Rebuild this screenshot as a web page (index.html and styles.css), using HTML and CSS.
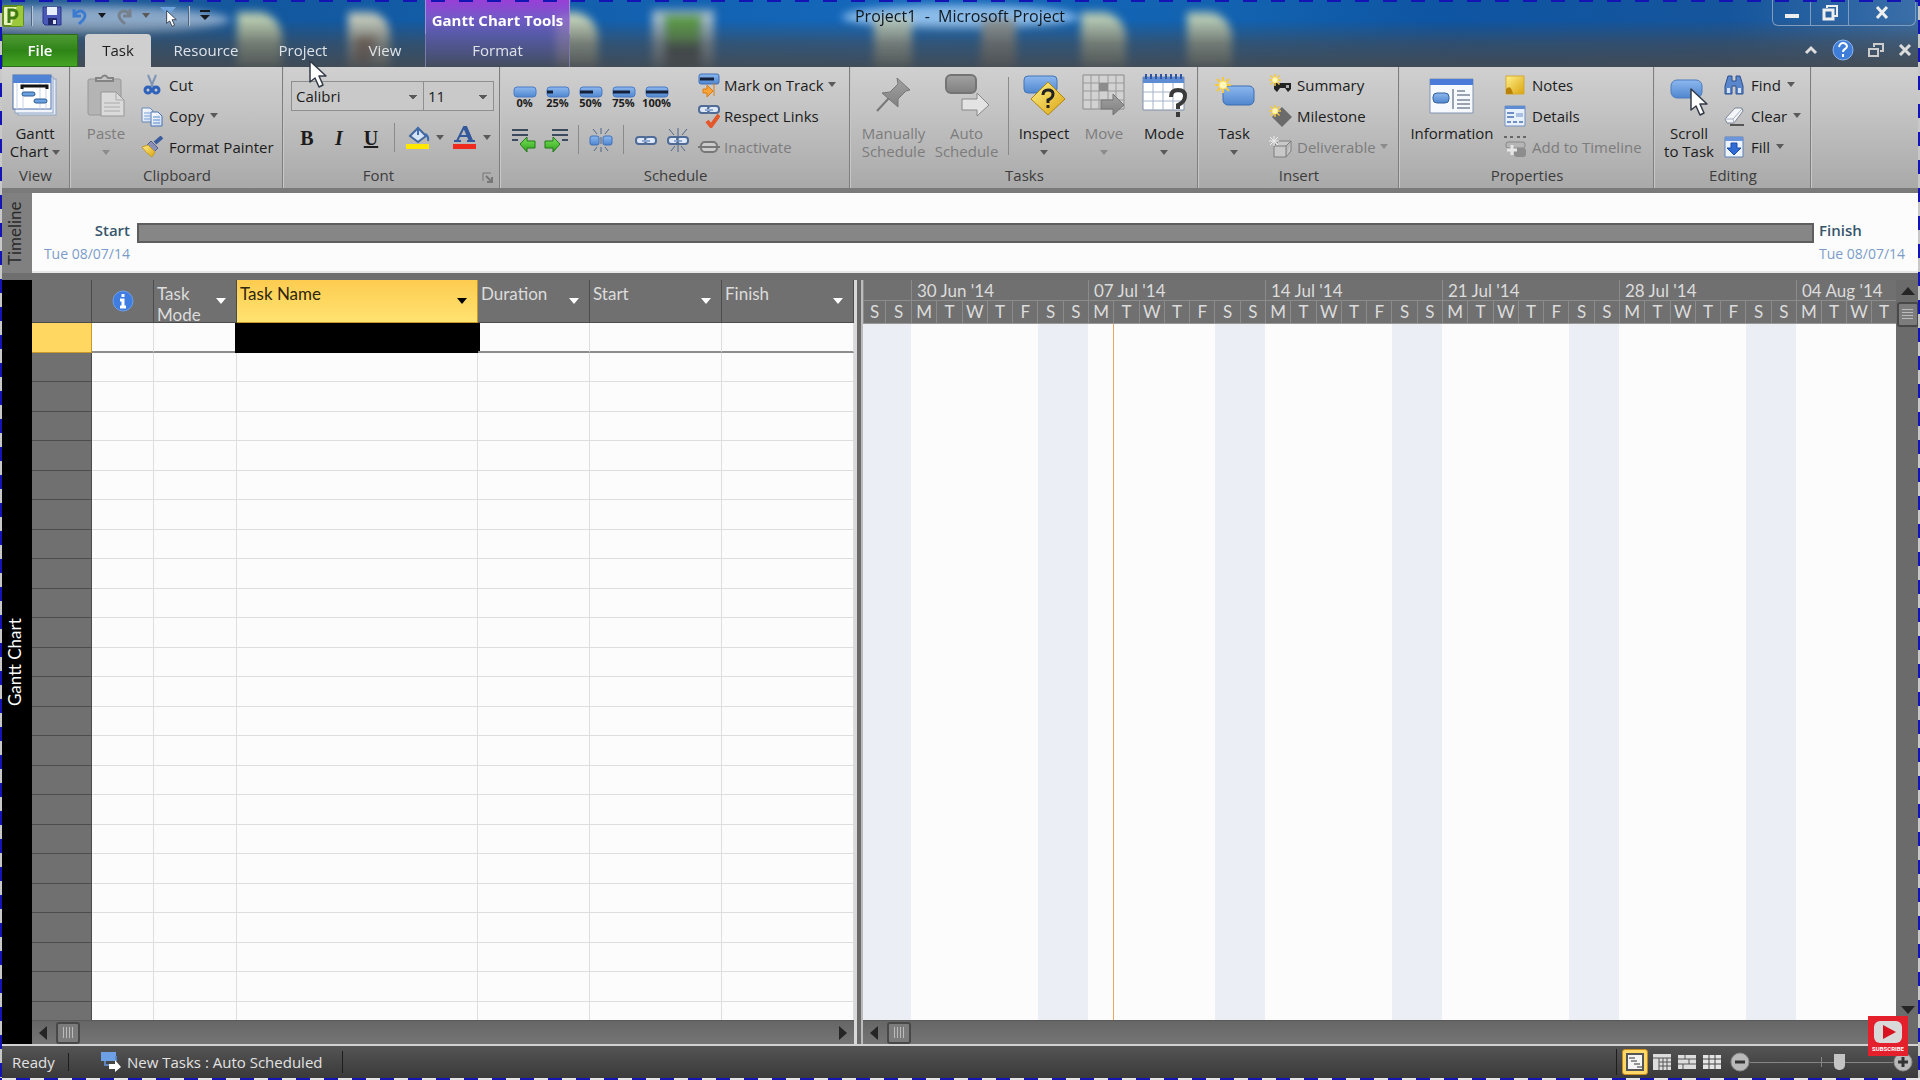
FILE: index.html
```html
<!DOCTYPE html>
<html lang="en">
  <head>
    <meta charset="utf-8">
    <title>Project1 - Microsoft Project</title>
    <link rel="stylesheet" href="styles.css">
  </head>
  <body>

    <!-- shared gradients and repeated symbols -->
    <svg class="defs" width="0" height="0">
      <defs>
        <linearGradient id="blue" x1="0" y1="0" x2="0" y2="1"><stop offset="0" stop-color="#8db8ee"/><stop offset="1" stop-color="#4f86cf"/></linearGradient>
        <linearGradient id="grey" x1="0" y1="0" x2="0" y2="1"><stop offset="0" stop-color="#a2a2a2"/><stop offset="1" stop-color="#808080"/></linearGradient>
        <linearGradient id="yellow" x1="0" y1="0" x2="1" y2="1"><stop offset="0" stop-color="#fff08a"/><stop offset="1" stop-color="#dba410"/></linearGradient>
        <linearGradient id="lime" x1="0" y1="0" x2="0" y2="1"><stop offset="0" stop-color="#7be05a"/><stop offset="1" stop-color="#2fa51c"/></linearGradient>
        <linearGradient id="paper" x1="0" y1="0" x2="1" y2="1"><stop offset="0" stop-color="#ffffff"/><stop offset="1" stop-color="#c9daf2"/></linearGradient>
        <symbol id="star" viewBox="0 0 16 16">
          <path d="M8 0v16M0 8h16M2 2l12 12M14 2L2 14" stroke="#f6c83a" stroke-width="2"/>
          <circle cx="8" cy="8" r="4" fill="#fff6b8" stroke="#f9dc6a"/>
        </symbol>
        <symbol id="chain" viewBox="0 0 22 12">
          <rect x="1" y="2" width="11" height="7" rx="3" fill="#dfe8f6" stroke="#4f6b96" stroke-width="2"/>
          <rect x="10" y="2" width="11" height="7" rx="3" fill="#dfe8f6" stroke="#4f6b96" stroke-width="2"/>
          <path d="M7 6h8" stroke="#8fa9d2" stroke-width="2"/>
        </symbol>
        <symbol id="pointer" viewBox="0 0 18 28">
          <path d="M1 1v21l5-4 4 9 4-2-4-9h7z" fill="#fff" stroke="#333a48" stroke-width="1.5" stroke-linejoin="round"/>
        </symbol>
      </defs>
    </svg>

    <header class="glass">
      <svg class="wallpaper" aria-hidden="true">
        <filter id="soft" x="-20%" y="-20%" width="140%" height="140%"><feGaussianBlur stdDeviation="4"/></filter>
        <g filter="url(#soft)">
          <ellipse cx="80" cy="20" rx="150" ry="14" fill="#b9c9dc" opacity=".7"/>
          <path d="M237 12h24q18 4 21 24v34h-45z" fill="#b4c6ac"/>
          <path d="M348 12h24q17 4 18 24v34h-42z" fill="#bcc2b6"/>
          <path d="M355 36h22l-6 30h-18z" fill="#9a7a66"/>
          <path d="M556 12h20q19 4 22 24v34h-42z" fill="#bccab4"/>
          <path d="M652 10h62v60h-62z" fill="#9db6c4"/>
          <path d="M664 14h38v30h-38z" fill="#5d9a48"/>
          <path d="M664 44h38v30h-38z" fill="#3c4742"/>
          <ellipse cx="960" cy="17" rx="118" ry="12" fill="#8abbe8"/>
          <path d="M874 16h38v54h-38z" fill="#b1c4b8"/>
          <path d="M982 18h34v52h-36z" fill="#8b9495"/>
          <path d="M1081 12h24q18 4 21 24v34h-45z" fill="#b1c4b0"/>
          <path d="M1187 12h24q18 4 21 24v34h-45z" fill="#b1c4b0"/>
        </g>
      </svg>
      <div class="shade"></div>

      <div class="title-row">
        <div class="title-left">
          <div class="quick-access">
            <svg class="app-icon" width="22" height="22"><rect x="1" y="1" width="20" height="20" rx="2" fill="#e8f3bd" stroke="#5d8c1c" stroke-width="2"/><path d="M15 1h6v20H9z" fill="#9cc83c"/><path d="M7 18V5h4a4 4 0 0 1 0 8H7" fill="none" stroke="#3f7a12" stroke-width="3"/></svg>
            <span class="bar"></span>
            <button title="Save"><svg width="20" height="20"><path d="M1 1h18v18H3l-2-2z" fill="#4a58b8" stroke="#2c3787"/><path d="M5 1h10v8H5z" fill="#e9eefc"/><path d="M6 12h9v7H6z" fill="#1f2766"/><path d="M11 14h3v4h-3z" fill="#dfe4f7"/></svg></button>
            <button title="Undo"><svg width="18" height="20"><path d="M3 3v7h7M3 9q5-6 9-3t0 8l-4 4" fill="none" stroke="#3d7bd0" stroke-width="3"/></svg><i class="caret dark"></i></button>
            <button title="Redo"><svg width="18" height="20"><path d="M15 3v7H8M15 9Q10 3 6 6t0 8l4 4" fill="none" stroke="#77818d" stroke-width="3"/></svg><i class="caret"></i></button>
            <button title="Select"><svg width="22" height="22"><path d="M1 2h16l-6 7v8l-4-3V9z" fill="#6fa3dc"/><use href="#pointer" x="7" y="5" width="11" height="17"/></svg></button>
            <span class="bar"></span>
            <button title="Customize Quick Access Toolbar"><svg width="12" height="12"><path d="M1 1h10" stroke="#15181c" stroke-width="2"/><path d="M1 5h10l-5 5z" fill="#15181c"/></svg></button>
          </div>
          <div class="context-title">Gantt Chart Tools</div>
        </div>
        <div class="window-title">Project1&nbsp; -&nbsp; Microsoft Project</div>
        <div class="window-buttons">
          <button title="Minimize"><svg width="16" height="16"><path d="M1 9h14v4H1z" fill="#eee"/></svg></button>
          <button title="Restore"><svg width="16" height="16"><path d="M5 3V1h10v10h-3" fill="none" stroke="#eee" stroke-width="2"/><rect x="2" y="5" width="9" height="9" fill="none" stroke="#eee" stroke-width="3"/></svg></button>
          <button class="wide" title="Close"><svg width="16" height="16"><path d="M3 2l10 11M13 2L3 13" stroke="#eee" stroke-width="3"/></svg></button>
        </div>
      </div>

      <nav class="tabs">
        <button class="tab file">File</button>
        <button class="tab active">Task</button>
        <button class="tab resource">Resource</button>
        <button class="tab project">Project</button>
        <button class="tab view">View</button>
        <button class="tab format">Format</button>
        <div class="tab-tools">
          <button title="Minimize the Ribbon"><svg width="14" height="12"><path d="M2 9l5-5 5 5" fill="none" stroke="#ddd" stroke-width="3"/></svg></button>
          <button title="Help"><svg width="22" height="22"><circle cx="11" cy="11" r="10" fill="#3f7ed8" stroke="#8db4ec"/><path d="M7 8q1-4 4-4t4 3q0 2-2 3t-2 3M11 15v3" fill="none" stroke="#fff" stroke-width="2"/></svg></button>
          <button title="Restore Window"><svg width="16" height="14"><path d="M6 4V1h9v7h-3" fill="none" stroke="#ccc" stroke-width="2"/><path d="M1 6h9v7H1z" fill="none" stroke="#ccc" stroke-width="2"/></svg></button>
          <button title="Close Window"><svg width="14" height="12"><path d="M2 1l10 10M12 1L2 11" stroke="#ddd" stroke-width="3"/></svg></button>
        </div>
      </nav>
    </header>

    <div class="ribbon">

      <section class="group g-view">
        <div class="group-body">
          <button class="big">
            <svg width="46" height="42"><rect x="6" y="5" width="38" height="36" fill="#e7edf6" stroke="#8fa3c2"/><rect x="3" y="3" width="38" height="36" fill="#f1f5fb" stroke="#8fa3c2"/><rect x="1" y="1" width="38" height="34" fill="#fff" stroke="#4c6ea8"/><path d="M1 1h38v8H1z" fill="#4f83d6"/><path d="M5 9v26M11 9v26M28 9v26M34 9v26" stroke="#c9d5e8"/><path d="M10 15v-3h25v3" fill="none" stroke="#111" stroke-width="3"/><rect x="10" y="18" width="13" height="4" rx="2" fill="#6aa2df" stroke="#2e5a95"/><rect x="22" y="25" width="13" height="4" rx="2" fill="#6aa2df" stroke="#2e5a95"/></svg>
            <span>Gantt<br>Chart <i class="caret"></i></span>
          </button>
        </div>
        <h2>View</h2>
      </section>

      <section class="group g-clipboard">
        <div class="group-body">
          <button class="big off">
            <svg width="40" height="42"><rect x="2" y="5" width="33" height="36" rx="2" fill="#b4b4b4" stroke="#989898"/><path d="M10 7h17V4h-5q-3-5-7 0h-5z" fill="#c6c6c6" stroke="#848484" stroke-width="2"/><path d="M15 18h15l8 8v16H15z" fill="#dadada" stroke="#979797"/><path d="M30 18v8h8M18 29h16M18 33h16M18 37h16" fill="none" stroke="#aaa"/></svg>
            <span>Paste<br><i class="caret"></i></span>
          </button>
          <div class="stack">
            <button class="small"><svg width="22" height="22"><path d="M7 1l5 12M15 1l-5 12" stroke="#7f93b4" stroke-width="2"/><circle cx="7" cy="16" r="3" fill="none" stroke="#2e62bb" stroke-width="3"/><circle cx="15" cy="16" r="3" fill="none" stroke="#2e62bb" stroke-width="3"/></svg>Cut</button>
            <button class="small"><svg width="22" height="22"><path d="M1 3h8l3 3v11H1z" fill="url(#paper)" stroke="#6687b8"/><path d="M3 8h6M3 11h6M3 14h6" stroke="#7fa1d4"/><path d="M10 7h7l4 4v10H10z" fill="url(#paper)" stroke="#4a73b3"/><path d="M12 12h7M12 15h7M12 18h7" stroke="#5f8bcb"/></svg>Copy <i class="caret"></i></button>
            <button class="small"><svg width="22" height="22"><path d="M21 1l-7 6" stroke="#3b5c9c" stroke-width="4"/><path d="M10 5l7 7-4 4-7-7z" fill="#8a90b5" stroke="#555c85"/><path d="M1 11l6-2 7 7-3 5q-6-4-10-10z" fill="url(#yellow)" stroke="#c49b25"/></svg>Format Painter</button>
          </div>
        </div>
        <h2>Clipboard</h2>
      </section>

      <section class="group g-font">
        <div class="group-body column">
          <div class="combos">
            <select class="font-name" aria-label="Font"><option>Calibri</option></select>
            <select class="font-size" aria-label="Font Size"><option>11</option></select>
          </div>
          <div class="font-tools">
            <button class="letter" title="Bold"><b>B</b></button>
            <button class="letter" title="Italic"><em>I</em></button>
            <button class="letter" title="Underline"><u>U</u></button>
            <span class="sep"></span>
            <button class="colour" title="Background Color"><svg width="24" height="24"><path d="M4 10l8-8 8 8-8 6z" fill="#d6e4f5" stroke="#43679c" stroke-width="2"/><path d="M12 9V1M19 8q4 2 3 7" fill="none" stroke="#3d6db4" stroke-width="2"/><path d="M0 18h23v5H0z" fill="#ffe800"/></svg><i class="caret"></i></button>
            <button class="colour" title="Font Color"><svg width="24" height="24"><path d="M4 15L11 1h2l6 14M7 10h9M1 15h7M14 15h8" fill="none" stroke="#33589b" stroke-width="2"/><path d="M12 1l6 14" stroke="#33589b" stroke-width="4"/><path d="M0 18h23v5H0z" fill="#f02a1c"/></svg><i class="caret"></i></button>
          </div>
        </div>
        <h2>Font</h2>
        <button class="launcher" title="Font"><svg width="11" height="11"><path d="M1 9V1h8" fill="none" stroke="#777"/><path d="M4 4l5 5M10 5v5H5" fill="none" stroke="#777" stroke-width="2"/></svg></button>
      </section>

      <section class="group g-schedule">
        <div class="group-body">
          <div class="schedule-tools">
            <div class="percents">
              <button><svg width="24" height="12"><rect x="1" y="1" width="22" height="10" rx="3" fill="url(#blue)" stroke="#4a7bc4"/></svg>0%</button>
              <button><svg width="24" height="12"><rect x="1" y="1" width="22" height="10" rx="3" fill="url(#blue)" stroke="#4a7bc4"/><path d="M1 6h6" stroke="#15203a" stroke-width="3"/></svg>25%</button>
              <button><svg width="24" height="12"><rect x="1" y="1" width="22" height="10" rx="3" fill="url(#blue)" stroke="#4a7bc4"/><path d="M1 6h13" stroke="#15203a" stroke-width="3"/></svg>50%</button>
              <button><svg width="24" height="12"><rect x="1" y="1" width="22" height="10" rx="3" fill="url(#blue)" stroke="#4a7bc4"/><path d="M1 6h17" stroke="#15203a" stroke-width="3"/></svg>75%</button>
              <button><svg width="24" height="12"><rect x="1" y="1" width="22" height="10" rx="3" fill="url(#blue)" stroke="#4a7bc4"/><path d="M1 6h22" stroke="#15203a" stroke-width="3"/></svg>100%</button>
            </div>
            <div class="links">
              <button title="Outdent Task"><svg width="24" height="24"><path d="M0 2h16M0 7h16M0 12h6" stroke="#3c4a60" stroke-width="2"/><path d="M8 16l7-7v4h8v7h-8v4z" fill="url(#lime)" stroke="#1f7a14"/></svg></button>
              <button title="Indent Task"><svg width="24" height="24"><path d="M8 2h16M8 7h16M18 12h6" stroke="#3c4a60" stroke-width="2"/><path d="M16 16L9 9v4H1v7h8v4z" fill="url(#lime)" stroke="#1f7a14"/></svg></button>
              <span class="sep"></span>
              <button title="Split Task"><svg width="24" height="24"><rect x="1" y="8" width="9" height="9" rx="2" fill="url(#blue)" stroke="#3f70b8"/><rect x="14" y="8" width="9" height="9" rx="2" fill="url(#blue)" stroke="#3f70b8"/><path d="M12 0v6M12 19v5M4 1l4 5M20 1l-4 5M5 23l3-4M19 23l-3-4M12 9v7" stroke="#4f6788" stroke-width="1"/></svg></button>
              <span class="sep"></span>
              <button title="Link Tasks"><svg width="24" height="24"><use href="#chain" x="1" y="7" width="22" height="12"/></svg></button>
              <button title="Unlink Tasks"><svg width="24" height="24"><use href="#chain" x="1" y="7" width="22" height="12"/><path d="M12 0v24M3 1l5 6M21 1l-5 6M5 23l4-5M19 23l-4-5" stroke="#4f6788"/></svg></button>
            </div>
          </div>
          <div class="stack">
            <button class="small"><svg width="22" height="24"><rect x="1" y="1" width="20" height="10" rx="2" fill="url(#blue)" stroke="#3f70b8"/><path d="M2 6h14" stroke="#15203a" stroke-width="3"/><path d="M5 16h4v-4l6 6-6 6v-4H5zM16 10v13" fill="#f9a436" stroke="#dc7a14"/></svg>Mark on Track <i class="caret"></i></button>
            <button class="small"><svg width="22" height="24"><use href="#chain" x="0" y="0" width="22" height="12"/><path d="M9 17l4 5L21 11" fill="none" stroke="#e4572a" stroke-width="4"/></svg>Respect Links</button>
            <button class="small off"><svg width="22" height="22"><rect x="3" y="6" width="16" height="10" rx="4" fill="#ccc" stroke="#777" stroke-width="2"/><path d="M0 11h22" stroke="#777" stroke-width="2"/></svg>Inactivate</button>
          </div>
        </div>
        <h2>Schedule</h2>
      </section>

      <section class="group g-tasks">
        <div class="group-body">
          <button class="big off">
            <svg width="42" height="42"><path d="M16 24L4 37" stroke="#777" stroke-width="2"/><path d="M24 4l13 12-4 1-8 8v8L9 19l8-1 8-8z" fill="url(#grey)" stroke="#777"/></svg>
            <span>Manually<br>Schedule</span>
          </button>
          <button class="big off">
            <svg width="46" height="42"><rect x="2" y="1" width="30" height="18" rx="5" fill="url(#grey)" stroke="#747474" stroke-width="2"/><path d="M18 25h15v-6l12 12-12 11v-6H18z" fill="#e3e3e3" stroke="#888"/></svg>
            <span>Auto<br>Schedule</span>
          </button>
          <span class="tall-sep"></span>
          <button class="big">
            <svg width="42" height="42"><rect x="1" y="2" width="33" height="17" rx="4" fill="url(#blue)" stroke="#4374b8"/><path d="M25 8l17 17-17 16L8 25z" fill="url(#yellow)" stroke="#b1860c"/><path d="M20 21q0-5 5-5t5 4-5 6v3M25 31v3" fill="none" stroke="#222" stroke-width="3"/></svg>
            <span>Inspect<br><i class="caret"></i></span>
          </button>
          <button class="big off">
            <svg width="44" height="42"><path d="M1 1h41v34H1z" fill="#d2d2d2" stroke="#8b8b8b"/><path d="M1 9h41M1 17h41M1 26h41M9 1v34M17 1v34M26 1v34M34 1v34" stroke="#999"/><path d="M17 9h9v8h-9z" fill="#8c8c8c"/><path d="M19 26h12v-6l11 11-11 10v-6H19z" fill="url(#grey)" stroke="#777"/></svg>
            <span>Move<br><i class="caret"></i></span>
          </button>
          <button class="big">
            <svg width="44" height="42"><path d="M1 3h41v33H1z" fill="#fff" stroke="#7f8fa8"/><path d="M1 3h41v6H1z" fill="#5d8bd4"/><path d="M4 0v5M9 0v5M14 0v5M19 0v5M24 0v5M29 0v5M34 0v5M39 0v5" stroke="#2f56a4" stroke-width="2"/><path d="M1 18h41M1 27h41M11 9v27M21 9v27M31 9v27" stroke="#a6b4ca"/><path d="M29 23q0-7 7-7t7 6-7 9v4M36 38v5" fill="none" stroke="#3a3a3a" stroke-width="4"/></svg>
            <span>Mode<br><i class="caret"></i></span>
          </button>
        </div>
        <h2>Tasks</h2>
      </section>

      <section class="group g-insert">
        <div class="group-body">
          <button class="big">
            <svg width="42" height="42"><rect x="10" y="12" width="31" height="19" rx="5" fill="url(#blue)" stroke="#3c6cb0"/><use href="#star" x="2" y="3" width="16" height="16"/></svg>
            <span>Task<br><i class="caret"></i></span>
          </button>
          <div class="stack">
            <button class="small"><svg width="24" height="22"><path d="M5 9h17v6l-3 3-3-4h-5l-3 4-3-3z" fill="#222"/><path d="M17 11h3v3h-3z" fill="#aaa"/><use href="#star" x="0" y="0" width="12" height="12"/></svg>Summary</button>
            <button class="small"><svg width="24" height="22"><path d="M13 2l10 10-10 10L3 12z" fill="#6b6b6b"/><use href="#star" x="0" y="0" width="12" height="12"/></svg>Milestone</button>
            <button class="small off"><svg width="24" height="22"><path d="M5 10h12v11H5zM5 10l5-5h12l-5 5M22 5v10l-5 6" fill="#c8c8c8" stroke="#7d7d7d"/><path d="M5 0v10M0 5h10M1 1l8 8M9 1L1 9" stroke="#eee"/></svg>Deliverable <i class="caret"></i></button>
          </div>
        </div>
        <h2>Insert</h2>
      </section>

      <section class="group g-properties">
        <div class="group-body">
          <button class="big">
            <svg width="46" height="42"><path d="M1 5h43v34H1z" fill="#f6f9fe" stroke="#8294b2"/><path d="M1 5h43v6H1z" fill="#4a7bd8"/><rect x="4" y="19" width="16" height="10" rx="4" fill="url(#blue)" stroke="#35609e"/><path d="M24 15v20M28 17h8M28 21h13M28 26h13M28 30h13M28 34h13" stroke="#9aa3b1" stroke-width="2"/></svg>
            <span>Information</span>
          </button>
          <div class="stack">
            <button class="small"><svg width="22" height="22"><path d="M2 2h18v18H2z" fill="url(#yellow)" stroke="#d5a930"/><path d="M2 15q5-5 7 5H2z" fill="#b9830a"/></svg>Notes</button>
            <button class="small"><svg width="22" height="22"><path d="M1 1h20v20H1z" fill="#e8f0fb" stroke="#7490bd"/><path d="M1 1h20v3H1z" fill="#5f8cd0"/><path d="M3 8h7M3 12h7M3 17h4M9 17h4M15 17h4" stroke="#6e90c4" stroke-width="2"/><path d="M12 8h7v4h-7z" fill="#a9c0e2"/></svg>Details</button>
            <button class="small off"><svg width="22" height="22"><path d="M0 1h3M6 1h3M13 1h3M19 1h3" stroke="#666" stroke-width="2"/><rect x="2" y="6" width="19" height="6" rx="2" fill="#b5b5b5" stroke="#888"/><rect x="10" y="12" width="12" height="9" rx="3" fill="#8d8d8d"/><path d="M8 9v10M3 14h10" stroke="#e6e6e6" stroke-width="3"/></svg>Add to Timeline</button>
          </div>
        </div>
        <h2>Properties</h2>
      </section>

      <section class="group g-editing">
        <div class="group-body">
          <button class="big">
            <svg width="42" height="42"><rect x="3" y="6" width="31" height="18" rx="6" fill="url(#blue)" stroke="#4b7cc0"/><use href="#pointer" x="22" y="14" width="18" height="28"/></svg>
            <span>Scroll<br>to Task</span>
          </button>
          <div class="stack">
            <button class="small"><svg width="22" height="22"><path d="M5 2h4v5h4V2h4l3 10v8h-7v-8H9v8H2v-8z" fill="#5a86cc" stroke="#2b4e8d"/><path d="M4 14h3v5H4zM15 14h3v5h-3z" fill="#d5e2f6"/></svg>Find <i class="caret"></i></button>
            <button class="small"><svg width="22" height="22"><path d="M2 14L12 3h7l1 3-9 12H4z" fill="#f4f6fa" stroke="#7c8797"/><path d="M2 14h8l1 4M10 14l9-10" fill="none" stroke="#a6b0bf"/><path d="M7 20h14" stroke="#555" stroke-width="2"/></svg>Clear <i class="caret"></i></button>
            <button class="small"><svg width="22" height="22"><path d="M2 1h18v20H2z" fill="#eef4fd" stroke="#5d7eb4"/><path d="M2 1h18v4H2z" fill="#6d96da"/><path d="M8 7h6v5h4l-7 7-7-7h4z" fill="#2e6bd4" stroke="#1d4da6"/></svg>Fill <i class="caret"></i></button>
          </div>
        </div>
        <h2>Editing</h2>
      </section>
    </div>

    <section class="timeline">
      <div class="side-label">Timeline</div>
      <div class="timeline-body">
        <div class="timeline-end start"><strong>Start</strong><span>Tue 08/07/14</span></div>
        <div class="timeline-bar"></div>
        <div class="timeline-end"><strong>Finish</strong><span>Tue 08/07/14</span></div>
      </div>
    </section>

    <main class="gantt">
      <div class="side-label black">Gantt Chart</div>

      <div class="sheet">
        <div class="sheet-view">
          <table>
            <colgroup><col class="c-row"><col class="c-info"><col class="c-mode"><col class="c-name"><col class="c-duration"><col class="c-start"><col class="c-finish"></colgroup>
            <thead>
              <tr>
                <th></th>
                <th class="info"><svg width="22" height="22"><circle cx="11" cy="11" r="10" fill="#3f7de0" stroke="#6c9eea"/><path d="M11 4v3M8 10h3v7M8 17h6" fill="none" stroke="#fff" stroke-width="3"/></svg></th>
                <th><div class="head">Task<br>Mode<i class="caret"></i></div></th>
                <th class="selected"><div class="head">Task Name<i class="caret"></i></div></th>
                <th><div class="head">Duration<i class="caret"></i></div></th>
                <th><div class="head">Start<i class="caret"></i></div></th>
                <th><div class="head">Finish<i class="caret"></i></div></th>
              </tr>
            </thead>
            <tbody id="rows"></tbody>
          </table>
        </div>
        <div class="hscroll">
          <button class="arrow left" title="Scroll left"></button>
          <span class="thumb"></span>
          <button class="arrow right" title="Scroll right"></button>
        </div>
      </div>

      <div class="splitter"></div>

      <div class="chart">
        <div class="timescale" id="timescale"></div>
        <div class="bars"><div class="today"></div></div>
        <div class="hscroll">
          <button class="arrow left" title="Scroll left"></button>
          <span class="thumb"></span>
        </div>
      </div>

      <div class="vscroll">
        <button class="arrow up" title="Scroll up"></button>
        <span class="thumb"></span>
        <button class="arrow down" title="Scroll down"></button>
      </div>
    </main>

    <footer class="status">
      <span class="ready">Ready</span>
      <span class="new-tasks"><svg width="22" height="22"><path d="M1 1h15v9H1z" fill="#6da0e4"/><path d="M5 10v4h5M16 5v5" fill="none" stroke="#5c86bd" stroke-width="2"/><path d="M9 13h6V9l6 7-6 5v-3H9z" fill="#fff"/></svg>New Tasks : Auto Scheduled</span>
      <div class="view-buttons">
        <button class="on" title="Gantt Chart"><svg width="18" height="18"><path d="M1 1h16v16H1z" fill="#f4f4f4" stroke="#555" stroke-width="2"/><path d="M3 5h6M5 8h6M8 11h6M11 14h5" stroke="#333" stroke-width="1"/></svg></button>
        <button title="Task Usage"><svg width="18" height="16"><path d="M0 0h18v16H0z" fill="#ddd"/><path d="M0 4h18M6 4v12M6 8h12M6 12h12M10 4v12M14 4v12" stroke="#555"/></svg></button>
        <button title="Team Planner"><svg width="18" height="14"><path d="M0 0h18v14H0z" fill="#ddd"/><path d="M0 4h18M0 9h18M7 0v4M5 9v5M11 4v5" stroke="#555" stroke-width="1"/></svg></button>
        <button title="Resource Sheet"><svg width="18" height="14"><path d="M0 0h18v14H0z" fill="#e4e4e4"/><path d="M0 4h18M0 9h18M6 0v14M12 0v14" stroke="#444" stroke-width="1"/></svg></button>
      </div>
      <div class="zoom">
        <button title="Zoom Out"><svg width="20" height="20"><circle cx="10" cy="10" r="9" fill="#b9b9b9" stroke="#8a8a8a"/><path d="M5 10h10" stroke="#333" stroke-width="3"/></svg></button>
        <input type="range" min="0" max="100" value="64" aria-label="Zoom">
        <button title="Zoom In"><svg width="20" height="20"><circle cx="10" cy="10" r="9" fill="#b9b9b9" stroke="#8a8a8a"/><path d="M5 10h10M10 5v10" stroke="#333" stroke-width="3"/></svg></button>
      </div>
    </footer>

    <svg class="mouse" width="18" height="28"><use href="#pointer" width="18" height="28"/></svg>

    <div class="subscribe">
      <svg width="30" height="24"><rect x="1" y="1" width="28" height="22" rx="6" fill="#d9d9d9"/><path d="M10 5l13 7-13 7z" fill="#d8121f"/></svg>
      SUBSCRIBE
    </div>
    <div class="ants"></div>

    <script src="script.js"></script>
  </body>
</html>
```
FILE: styles.css
```css
* {
  box-sizing: border-box;
}

body {
  margin: 0;
  height: 100vh;
  display: flex;
  flex-direction: column;
  overflow: hidden;
  background: #6f6f6f;
  color: #1c1c1c;
  font-family: "Open Sans", "Noto Sans", sans-serif;
  font-size: 15px;
  line-height: 18px;
}

button {
  display: flex;
  align-items: center;
  padding: 0;
  border: 0;
  background: none;
  color: inherit;
  font: inherit;
}

svg {
  display: block;
  flex: none;
}

.defs {
  position: absolute;
}

.caret {
  display: inline-block;
  flex: none;
  border: 4px solid transparent;
  border-top: 5px solid #5a5a5a;
  border-bottom: 0;
}

.caret.dark {
  border-top-color: #15181c;
}

/* title bar and tabs */

.glass {
  position: relative;
  flex: none;
  background: linear-gradient(90deg, #23598f, #12589f 14%, #1467ba 45%, #1262b0 65%, #0e55a3 75%, #15559c 90%, #3b6fa8);
}

.wallpaper,
.shade {
  position: absolute;
  top: 0;
  left: 0;
  width: 100%;
  height: 100%;
}

.shade {
  background: linear-gradient(rgba(70, 74, 78, 0) 30%, rgba(70, 74, 78, .6) 65%, rgba(70, 74, 78, .9));
}

.title-row {
  position: relative;
  display: grid;
  grid-template-columns: 1fr auto 1fr;
  height: 34px;
}

.title-left {
  display: flex;
}

.quick-access {
  flex: 0 0 425px;
  display: flex;
  align-items: center;
  gap: 9px;
  padding: 0 0 3px 2px;
}

.quick-access button {
  gap: 9px;
}

.bar {
  width: 2px;
  height: 20px;
  border-left: 1px solid #51657c;
  border-right: 1px solid #b5c6da;
}

.quick-access .bar {
  margin-left: -2px;
}

.context-title {
  flex: 0 0 145px;
  padding-top: 11px;
  border-left: 1px solid #a58fd4;
  border-right: 1px solid #a58fd4;
  background: linear-gradient(#9a3fd8, rgba(134, 88, 205, .85) 50%, rgba(110, 92, 180, .7));
  color: #fff;
  font-size: 15px;
  font-weight: 700;
  text-align: center;
  white-space: nowrap;
}

.window-title {
  padding-top: 7px;
  color: #101820;
  font-size: 16px;
}

.window-buttons {
  justify-self: end;
  display: flex;
  height: 26px;
  margin-right: 4px;
  border: 1px solid #7d9cc0;
  border-top: 0;
  border-radius: 0 0 6px 6px;
}

.window-buttons button {
  width: 38px;
  justify-content: center;
  border-right: 1px solid #7d9cc0;
}

.window-buttons .wide {
  width: 66px;
  border: 0;
}

.tabs {
  position: relative;
  display: flex;
  height: 33px;
  padding-left: 2px;
  color: #dfe3e8;
}

.tab {
  justify-content: center;
  padding-bottom: 2px;
}

.tab.file {
  width: 76px;
  margin-right: 7px;
  border: 1px solid #2e6b1a;
  background: linear-gradient(#4d9a33, #2f8417 50%, #45a524);
  color: #fff;
  font-weight: 600;
}

.tab.active {
  width: 66px;
  border-radius: 4px 4px 0 0;
  background: #cfcfcf;
  color: #1c1c1c;
}

.tab.resource {
  width: 110px;
}

.tab.project {
  width: 84px;
}

.tab.view {
  width: 80px;
}

.tab.format {
  width: 145px;
  border-left: 1px solid #7d79a8;
  border-right: 1px solid #7d79a8;
  background: linear-gradient(rgba(110, 92, 180, .7), rgba(80, 80, 110, .2));
}

.tab-tools {
  display: flex;
  gap: 14px;
  margin: 0 8px 0 auto;
  padding-bottom: 2px;
}

/* ribbon */

.ribbon {
  flex: none;
  display: flex;
  height: 126px;
  border-bottom: 5px solid #7a7a7a;
  background: linear-gradient(#d0d0d0, #c2c2c2 40%, #a9a9a9);
}

.group {
  position: relative;
  display: flex;
  flex-direction: column;
  border-right: 1px solid #7e7e7e;
  box-shadow: 1px 0 #c8c8c8;
}

.group h2 {
  margin: 0;
  height: 25px;
  padding-left: 2px;
  color: #3c3c3c;
  font-size: 15px;
  font-weight: 400;
  line-height: 24px;
  text-align: center;
}

.group-body {
  flex: 1;
  display: flex;
  padding: 2px 0 0 1px;
}

.group-body.column {
  flex-direction: column;
}

.g-view { width: 70px; }
.g-clipboard { width: 213px; }
.g-font { width: 217px; }
.g-schedule { width: 350px; }
.g-tasks { width: 348px; }
.g-insert { width: 201px; }
.g-properties { width: 255px; }
.g-editing { width: 157px; }

.g-font h2 {
  padding-right: 27px;
}

.big {
  flex: none;
  flex-direction: column;
  gap: 8px;
  width: 68px;
  padding-top: 5px;
}

.big svg {
  height: 42px;
  overflow: visible;
}

.big .caret {
  vertical-align: middle;
}

.off {
  color: #7c7c7c;
}

.off .caret {
  border-top-color: #8b8b8b;
}

.stack {
  display: flex;
  flex-direction: column;
}

.small {
  gap: 6px;
  height: 31px;
  white-space: nowrap;
}

.g-view .big {
  width: 100%;
}

.g-properties .big {
  width: 104px;
}

.g-tasks .big {
  width: 60px;
}

.g-tasks .big.off:nth-child(-n+2) {
  width: 73px;
}

.g-tasks .group-body {
  padding-left: 7px;
}

.tall-sep {
  width: 2px;
  height: 78px;
  margin: 8px 4px 0 5px;
  border-left: 1px solid #8a8a8a;
}

.sep {
  width: 1px;
  height: 29px;
  background: #8a8a8a;
}

.combos {
  display: flex;
  padding: 12px 0 0 7px;
}

.combos select {
  appearance: none;
  height: 30px;
  padding: 0 4px;
  border: 1px solid #8f8f8f;
  border-radius: 0;
  background: linear-gradient(#5a5a5a, #5a5a5a) right 6px top 13px / 8px 1px no-repeat,
    linear-gradient(#5a5a5a, #5a5a5a) right 7px top 14px / 6px 1px no-repeat,
    linear-gradient(#5a5a5a, #5a5a5a) right 8px top 15px / 4px 1px no-repeat,
    linear-gradient(#5a5a5a, #5a5a5a) right 9px top 16px / 2px 1px no-repeat,
    #c9c9c9;
  color: #1c1c1c;
  font: inherit;
}

.combos .font-name {
  width: 133px;
}

.combos .font-size {
  width: 70px;
  border-left: 0;
}

.font-tools {
  display: flex;
  align-items: center;
  padding: 12px 0 0 7px;
}

.letter {
  width: 32px;
  justify-content: center;
  font-family: "Liberation Serif", serif;
  font-size: 20px;
  font-weight: 700;
}

.colour {
  gap: 6px;
  margin-left: 11px;
}

.colour + .colour {
  margin-left: 9px;
}

.font-tools .sep {
  margin-left: 7px;
}

.launcher {
  position: absolute;
  right: 6px;
  bottom: 5px;
}

.schedule-tools {
  width: 197px;
  padding: 17px 0 0 7px;
}

.percents {
  display: flex;
}

.percents button {
  flex-direction: column;
  width: 33px;
  font-size: 11px;
  font-weight: 700;
  line-height: 10px;
}

.links {
  display: flex;
  align-items: center;
  gap: 8px;
  margin: 17px 0 0 4px;
}

.links .sep {
  margin: 0 2px;
}

.g-clipboard .big,
.g-schedule .big,
.g-insert .big {
  width: 70px;
}

.g-insert .small,
.g-schedule .small {
  gap: 4px;
}

/* timeline */

.side-label {
  flex: 0 0 32px;
  writing-mode: vertical-rl;
  transform: rotate(180deg);
  background: #808080;
  color: #2a2a2a;
  font-family: Lato, sans-serif;
  font-size: 17px;
  line-height: 30px;
  text-align: center;
}

.side-label.black {
  background: #000;
  color: #fff;
}

.timeline {
  flex: none;
  display: flex;
  height: 87px;
  border-bottom: 7px solid #6f6f6f;
}

.timeline-body {
  flex: 1;
  display: flex;
  padding: 27px 11px 0 8px;
  border-bottom: 2px solid #e8e8e8;
  background: #fcfcfc;
}

.timeline-end {
  display: flex;
  flex-direction: column;
  gap: 5px;
  width: 90px;
  color: #7b9cc9;
  font-size: 14px;
  line-height: 18px;
  white-space: nowrap;
}

.timeline-end strong {
  color: #36566b;
  font-size: 15px;
  font-weight: 600;
  line-height: 20px;
}

.timeline-end.start {
  text-align: right;
}

.timeline-bar {
  flex: 1;
  height: 20px;
  margin: 3px 5px 0 7px;
  border: 2px solid #5e5e5e;
  background: #868686;
}

/* task sheet */

.gantt {
  flex: 1;
  display: flex;
  min-height: 0;
  font-family: Lato, sans-serif;
}

.sheet {
  flex: 0 0 822px;
  display: flex;
  flex-direction: column;
}

.sheet-view {
  flex: 1;
  min-height: 0;
  overflow: hidden;
  background: #fcfcfc;
}

.sheet table {
  width: 100%;
  table-layout: fixed;
  border-collapse: separate;
  border-spacing: 0;
}

.c-row { width: 60px; }
.c-info { width: 62px; }
.c-mode { width: 83px; }
.c-name { width: 241px; }
.c-duration { width: 112px; }
.c-start { width: 132px; }
.c-finish { width: 132px; }

.sheet th,
.sheet td {
  padding: 0;
  border-right: 1px solid #dedede;
  border-bottom: 1px solid #dedede;
}

.sheet th {
  border-color: #4c4c4c;
  background: #707070;
  color: #dcdcdc;
  font-size: 17px;
  font-weight: 400;
  text-align: left;
}

.sheet thead th {
  height: 43px;
}

.sheet .info svg {
  margin: 0 auto;
}

.head {
  position: relative;
  height: 42px;
  padding: 3px 0 0 3px;
  line-height: 21px;
}

.head .caret {
  position: absolute;
  right: 10px;
  top: 18px;
  border-width: 6px 5px 0;
  border-top-color: #fff;
}

.sheet .selected {
  border-color: #c89a2c;
  background: linear-gradient(#fdcc50, #ffe371);
  color: #2d2610;
}

.selected .caret {
  border-top-color: #000;
}

.sheet td,
.sheet tbody th {
  height: 29px;
}

.sheet tr:nth-child(odd) td {
  height: 30px;
}

.sheet .current th {
  border-color: #c89a2c;
  background: #ffd761;
}

.sheet .current td {
  border-bottom: 2px solid #8d8d8d;
}

.sheet .current .cell {
  border-color: #000;
  background: #000;
  box-shadow: -2px 0 #000, 2px 0 #000;
}

.hscroll {
  flex: 0 0 24px;
  display: flex;
  align-items: center;
  gap: 9px;
  padding: 0 7px;
  border-top: 1px solid #5a5a5a;
  background: linear-gradient(#666, #757575);
}

.arrow {
  border: 7px solid transparent;
}

.arrow.left {
  border-right: 8px solid #252525;
  border-left: 0;
}

.arrow.right {
  margin-left: auto;
  border-left: 8px solid #252525;
  border-right: 0;
}

.arrow.up {
  border-bottom: 8px solid #252525;
  border-top: 0;
}

.arrow.down {
  margin-top: auto;
  border-top: 8px solid #252525;
  border-bottom: 0;
}

.thumb {
  width: 24px;
  height: 22px;
  border: 2px solid #484848;
  border-radius: 3px;
  background: repeating-linear-gradient(90deg, #bbb 0 1px, transparent 1px 3px) center / 11px 11px no-repeat, #7c7c7c;
}

.splitter {
  flex: 0 0 9px;
  border-left: 3px solid #d9d9d9;
  border-right: 2px solid #bbb;
  background: #6a6a6a;
}

/* chart */

.chart {
  flex: 1;
  display: flex;
  flex-direction: column;
  min-width: 0;
}

.timescale {
  display: flex;
  height: 44px;
  overflow: hidden;
  border-bottom: 1px solid #999;
  background: #707070;
  color: #dcdcdc;
  font-size: 17px;
}

.week {
  flex: 0 0 177px;
  display: grid;
  grid-template: 21px 22px / repeat(7, 1fr);
  line-height: 21px;
}

.week.head-days {
  flex-basis: 48px;
  grid-template-columns: 22px 26px;
}

.week.tail-days {
  flex: 1;
  grid-template-columns: repeat(4, 1fr);
}

.week b {
  grid-column: 1 / -1;
  padding-left: 5px;
  border-left: 1px solid #8b8b8b;
  border-bottom: 1px solid #8b8b8b;
  font-weight: 400;
  white-space: nowrap;
}

.week span {
  border-left: 1px solid #8b8b8b;
  text-align: center;
}

.bars {
  flex: 1;
  position: relative;
  background: repeating-linear-gradient(90deg, #ebeff5 0 48px, #fcfcfc 48px 175px, #ebeff5 175px 177px);
}

.today {
  position: absolute;
  top: 0;
  bottom: 0;
  left: 250px;
  border-left: 1px solid #eda45c;
}

.vscroll {
  flex: 0 0 24px;
  display: flex;
  flex-direction: column;
  align-items: center;
  padding: 7px 1px 30px 0;
  background: #6b6b6b;
}

.vscroll .thumb {
  width: 22px;
  height: 25px;
  margin-top: 7px;
  background: repeating-linear-gradient(#bbb 0 1px, transparent 1px 3px) center / 11px 11px no-repeat, #7c7c7c;
}

/* status bar */

.status {
  flex: none;
  display: flex;
  align-items: center;
  height: 36px;
  padding: 0 7px 2px 12px;
  border-top: 2px solid #d2d2d2;
  background: linear-gradient(#545454, #383838);
  color: #e2e2e2;
}

.ready {
  width: 57px;
  border-right: 1px solid #1d1d1d;
}

.new-tasks {
  display: flex;
  gap: 5px;
  align-items: center;
  width: 274px;
  padding-left: 31px;
  border-right: 1px solid #1d1d1d;
}

.view-buttons {
  display: flex;
  align-items: center;
  gap: 7px;
  margin: 0 9px 0 auto;
  padding-left: 5px;
  border-left: 1px solid #1d1d1d;
}

.view-buttons .on {
  width: 26px;
  height: 26px;
  margin-right: -2px;
  justify-content: center;
  border: 1px solid #c98d1b;
  border-radius: 3px;
  background: #ffd869;
}

.zoom {
  display: flex;
  align-items: center;
}

.zoom input {
  appearance: none;
  width: 143px;
  height: 20px;
  margin: 0;
  background: linear-gradient(#858585, #858585) center / 100% 1px no-repeat,
    linear-gradient(#858585, #858585) center / 1px 10px no-repeat;
}

.zoom input::-webkit-slider-thumb {
  appearance: none;
  width: 11px;
  height: 16px;
  border-radius: 0 0 5px 5px;
  background: #c4c4c4;
}

/* things that float over the window */

.mouse {
  position: absolute;
  left: 309px;
  top: 60px;
}

.subscribe {
  position: absolute;
  right: 12px;
  bottom: 24px;
  display: flex;
  flex-direction: column;
  align-items: center;
  width: 40px;
  height: 40px;
  padding-top: 4px;
  background: #e3202c;
  color: #fff;
  font-family: Roboto, sans-serif;
  font-size: 6px;
  font-weight: 700;
  line-height: 9px;
}

.ants {
  position: absolute;
  inset: 0;
  pointer-events: none;
  background:
    repeating-linear-gradient(90deg, #1414b4 0 14px, transparent 14px 28px) 11px 0 / 1932px 2px repeat-x,
    repeating-linear-gradient(90deg, #1414b4 0 14px, #e4e4e4 14px 28px) 16px 100% / 1932px 2px repeat-x,
    repeating-linear-gradient(#1414b4 0 14px, #c8c8c8 14px 28px) 0 27px / 2px 1092px repeat-y,
    repeating-linear-gradient(#1414b4 0 14px, #c8c8c8 14px 28px) 100% 20px / 2px 1092px repeat-y;
}
```
FILE: script.js
```
const weeks = ["30 Jun '14", "07 Jul '14", "14 Jul '14", "21 Jul '14", "28 Jul '14"]
const days = ['M', 'T', 'W', 'T', 'F', 'S', 'S']

function fillRows(count) {
  const rows = document.getElementById('rows')
  for (let i = 0; i < count; i++) {
    const row = rows.insertRow()
    row.appendChild(document.createElement('th'))
    for (let c = 0; c < 6; c++) {
      row.insertCell()
    }
    if (i === 0) {
      row.className = 'current'
      row.cells[3].className = 'cell'
    }
  }
}

function addWeek(title, letters, extra) {
  const week = document.createElement('div')
  week.className = 'week' + extra
  week.innerHTML = '<b>' + title + '</b>' + letters.map(d => '<span>' + d + '</span>').join('')
  document.getElementById('timescale').appendChild(week)
}

fillRows(24)
addWeek('', days.slice(5), ' head-days')
weeks.forEach(title => addWeek(title, days, ''))
addWeek("04 Aug '14", days.slice(0, 4), ' tail-days')
```
